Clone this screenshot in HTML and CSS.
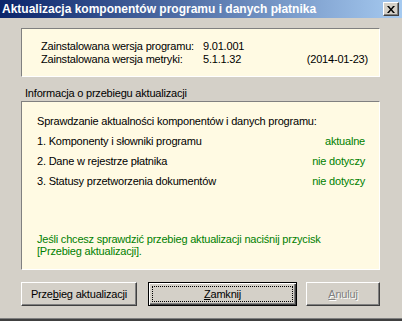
FILE: index.html
```html
<!DOCTYPE html>
<html lang="pl">
<head>
    <meta charset="UTF-8">
    <title>Aktualizacja komponentów programu i danych płatnika</title>
    <link rel="stylesheet" href="styles.css">
</head>
<body>
    <div class="window">
        <div class="titlebar">
            <span class="title">Aktualizacja komponentów programu i danych płatnika</span>
            <button class="close" title="Zamknij">
                <svg width="8" height="7" viewBox="0 0 8 7">
                    <path d="M0 0h2l2 2.5L6 0h2L5 3.5 8 7H6L4 4.5 2 7H0l3-3.5z" fill="#000"/>
                </svg>
            </button>
        </div>

        <div class="content">
            <!-- wersje -->
            <div class="panel versions">
                <div class="vrow">
                    <span class="vlabel">Zainstalowana wersja programu:</span>
                    <span class="vvalue">9.01.001</span>
                    <span class="vdate"></span>
                </div>
                <div class="vrow">
                    <span class="vlabel">Zainstalowana wersja metryki:</span>
                    <span class="vvalue">5.1.1.32</span>
                    <span class="vdate">(2014-01-23)</span>
                </div>
            </div>

            <div class="group-label">Informacja o przebiegu aktualizacji</div>

            <!-- przebieg -->
            <div class="panel info">
                <div class="irow">Sprawdzanie aktualności komponentów i danych programu:</div>
                <div class="irow">
                    <span>1. Komponenty i słowniki programu</span>
                    <span class="ok">aktualne</span>
                </div>
                <div class="irow">
                    <span>2. Dane w rejestrze płatnika</span>
                    <span class="ok">nie dotyczy</span>
                </div>
                <div class="irow">
                    <span>3. Statusy przetworzenia dokumentów</span>
                    <span class="ok">nie dotyczy</span>
                </div>
                <p class="hint">Jeśli chcesz sprawdzić przebieg aktualizacji naciśnij przycisk<br>[Przebieg aktualizacji].</p>
            </div>

            <div class="buttons">
                <button class="btn btn-log">Prze<u>b</u>ieg aktualizacji</button>
                <button class="btn btn-close default"><span class="focus"><u>Z</u>amknij</span></button>
                <button class="btn btn-cancel" disabled><u>A</u>nuluj</button>
            </div>
        </div>
    </div>
</body>
</html>
```

FILE: styles.css
```css
html, body {
    margin: 0;
    padding: 0;
}
body {
    width: 402px;
    height: 321px;
    overflow: hidden;
    background: #d4d0c8;
    font-family: 'Liberation Sans', Arial, sans-serif;
    font-size: 11px;
    letter-spacing: -0.2px;
    color: #000;
}
.window {
    height: 318px;
    border-bottom: 1px solid #808080;
    box-shadow: 0 2px 0 #404040;
}
.titlebar {
    height: 18px;
    display: flex;
    align-items: center;
    justify-content: space-between;
    padding: 0 3px 0 2px;
    background: linear-gradient(to right, #0a246a, #a6caf0);
}
.title {
    color: #fff;
    font-family: 'Liberation Sans', Arial, sans-serif;
    font-weight: bold;
    font-size: 12px;
    letter-spacing: 0;
}
.close {
    width: 16px;
    height: 14px;
    padding: 0;
    display: flex;
    align-items: center;
    justify-content: center;
    background: #d4d0c8;
    border: 1px solid;
    border-color: #fff #404040 #404040 #fff;
    box-shadow: inset -1px -1px 0 #808080;
}
.content {
    padding: 10px 22px 0 21px;
}
.panel {
    background: #fffae3;
    border: 1px solid;
    border-color: #808080 #fff #fff #808080;
}
.versions {
    height: 47px;
    padding: 0 11px 0 19px;
    display: flex;
    flex-direction: column;
    justify-content: center;
}
.vrow {
    display: flex;
    height: 13px;
    align-items: center;
}
.vlabel {
    width: 162px;
}
.vvalue {
    flex: 1;
}
.group-label {
    margin: 11px 0 2px 4px;
    height: 11px;
    line-height: 11px;
}
.info {
    padding: 9px 14px 0 15px;
    box-sizing: border-box;
    height: 169px;
}
.irow {
    height: 20px;
    display: flex;
    align-items: center;
    justify-content: space-between;
}
.ok {
    color: #008000;
}
.hint {
    color: #008000;
    margin: 42px 0 0;
    line-height: 12px;
}
.buttons {
    display: flex;
    margin-top: 12px;
    justify-content: space-between;
}
.btn {
    height: 24px;
    padding: 0;
    font-family: 'Liberation Sans', Arial, sans-serif;
    font-size: 11px;
    letter-spacing: -0.2px;
    color: #000;
    background: #d4d0c8;
    border: 1px solid;
    border-color: #fff #404040 #404040 #fff;
    box-shadow: inset -1px -1px 0 #808080;
}
.btn-log {
    width: 116px;
}
.btn-close {
    width: 149px;
    margin-left: 11px;
}
.btn-cancel {
    width: 74px;
    margin-left: 9px;
    color: #808080;
    text-shadow: 1px 1px 0 #fff;
}
.default {
    border: 1px solid #000;
    box-shadow: inset 1px 1px 0 #fff, inset -1px -1px 0 #404040, inset -2px -2px 0 #808080;
    padding: 3px;
}
.focus {
    display: flex;
    align-items: center;
    justify-content: center;
    height: 100%;
    box-sizing: border-box;
    border: 1px dotted #000;
}
```
